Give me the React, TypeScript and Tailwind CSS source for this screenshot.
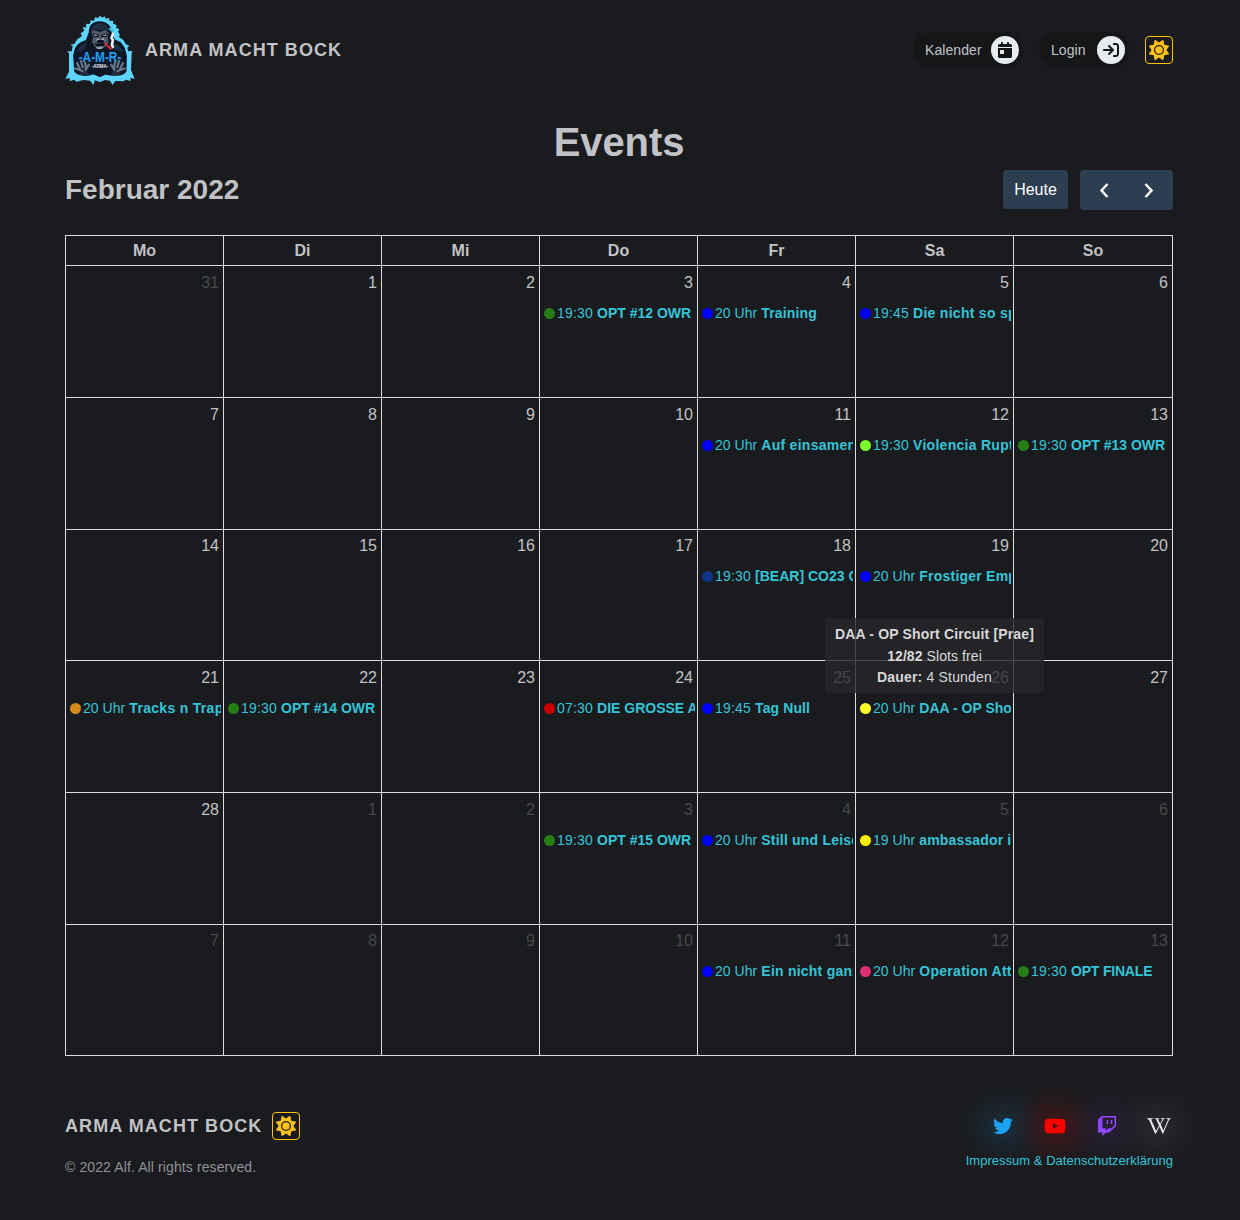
import React from "react";
import { FaTwitter, FaYoutube, FaTwitch, FaWikipediaW } from "react-icons/fa";
import { FaCalendarDay, FaArrowRightToBracket, FaSun } from "react-icons/fa6";

type CalEvent = { color: string; time: string; title: string; tracking: string };
type Day = { n: number; other?: boolean; event?: CalEvent };

const ev = (color: string, time: string, title: string, tracking = "tracking-normal"): CalEvent => ({ color, time, title, tracking });
const GREEN = "#257e15";
const BLUE = "#0000ff";

const weeks: { tall: boolean; days: Day[] }[] = [
  {
    tall: true,
    days: [
      { n: 31, other: true }, { n: 1 }, { n: 2 },
      { n: 3, event: ev(GREEN, "19:30", "OPT #12 OWR") },
      { n: 4, event: ev(BLUE, "20 Uhr", "Training", "tracking-[0.15px]") },
      { n: 5, event: ev(BLUE, "19:45", "Die nicht so spezielle", "tracking-[0.28px]") },
      { n: 6 },
    ],
  },
  {
    tall: true,
    days: [
      { n: 7 }, { n: 8 }, { n: 9 }, { n: 10 },
      { n: 11, event: ev(BLUE, "20 Uhr", "Auf einsamen Wegen", "tracking-[0.27px]") },
      { n: 12, event: ev("#7cfc2a", "19:30", "Violencia Ruptura", "tracking-[0.28px]") },
      { n: 13, event: ev(GREEN, "19:30", "OPT #13 OWR") },
    ],
  },
  {
    tall: false,
    days: [
      { n: 14 }, { n: 15 }, { n: 16 }, { n: 17 },
      { n: 18, event: ev("#113588", "19:30", "[BEAR] CO23 Operation") },
      { n: 19, event: ev(BLUE, "20 Uhr", "Frostiger Empfang", "tracking-[0.22px]") },
      { n: 20 },
    ],
  },
  {
    tall: true,
    days: [
      { n: 21, event: ev("#d68a1c", "20 Uhr", "Tracks n Traps", "tracking-[0.3px]") },
      { n: 22, event: ev(GREEN, "19:30", "OPT #14 OWR") },
      { n: 23 },
      { n: 24, event: ev("#cc0000", "07:30", "DIE GROSSE ARMA") },
      { n: 25, event: ev(BLUE, "19:45", "Tag Null", "tracking-[0.1px]") },
      { n: 26, event: ev("#fcfc2c", "20 Uhr", "DAA - OP Short Circuit") },
      { n: 27 },
    ],
  },
  {
    tall: true,
    days: [
      { n: 28 }, { n: 1, other: true }, { n: 2, other: true },
      { n: 3, other: true, event: ev(GREEN, "19:30", "OPT #15 OWR") },
      { n: 4, other: true, event: ev(BLUE, "20 Uhr", "Still und Leise", "tracking-[0.2px]") },
      { n: 5, other: true, event: ev("#fff000", "19 Uhr", "ambassador in", "tracking-[0.15px]") },
      { n: 6, other: true },
    ],
  },
  {
    tall: false,
    days: [
      { n: 7, other: true }, { n: 8, other: true }, { n: 9, other: true }, { n: 10, other: true },
      { n: 11, other: true, event: ev(BLUE, "20 Uhr", "Ein nicht ganz", "tracking-[0.23px]") },
      { n: 12, other: true, event: ev("#dc3070", "20 Uhr", "Operation Attika", "tracking-[0.27px]") },
      { n: 13, other: true, event: ev(GREEN, "19:30", "OPT FINALE", "tracking-[-0.2px]") },
    ],
  },
];

function Logo() {
  return (
    <svg viewBox="15 15 210 210" className="h-[70px] w-[70px]" role="img" aria-label="A-M-R Arma">
      <path
        fill="#5dd4fc"
        d="M120 17L126 23L134 19L137 26L147 24L148 32L160 33L159 41L170 45L168 53L178 58L174 65L180 75L176 80L190 90L197 102L208 108L202 113L205 124L216 122L215 131L213 180L224 207L211 203L212 213L198 209L190 214L166 213L158 225L150 212L135 210L120 216L104 211L101 225L90 212L70 210L50 215L42 209L29 214L30 205L16 206L27 185L27 130L21 124L35 124L38 108L31 104L43 102L52 88L66 78L62 70L73 62L68 50L78 53L79 41L90 42L92 31L102 33L105 22L114 24Z"
      />
      <path
        fill="#0d1725"
        stroke="#5dd4fc"
        strokeWidth="5"
        d="M119 31C142 31 156 45 157 66L166 86C183 92 197 106 200 125L203 137L202 186C193 200 173 201 155 199L136 197L120 204L100 196L81 200C62 201 47 196 40 185L37 137L41 119C46 103 60 92 76 88L84 66C84 44 98 31 119 31Z"
      />
      <path fill="#202c40" d="M98 48Q120 30 141 48L149 65L139 60H101L91 68ZM47 125L66 104L82 98L73 119ZM192 125L174 104L156 98L165 119ZM54 193L76 180L92 197ZM186 193L164 180L148 197Z" />
      <path fill="#4d5868" d="M94 67L101 60L119 66L137 60L146 68L143 83L146 96L136 110L121 115L103 108L96 97L99 82Z" />
      <path fill="#0b111b" d="M99 69L118 75L115 82L101 80ZM143 69L123 75L125 82L141 80ZM107 90H136L130 98H114ZM102 101L139 99L132 107L111 108Z" />
      <path fill="#9da8b6" d="M102 72L115 77L104 78ZM140 72L127 77L138 78ZM112 84L120 88L107 94ZM130 84L122 88L137 94ZM106 112L132 111L124 117H112Z" />
      <path fill="none" stroke="#e6eeef" strokeWidth="8" d="M161 113C147 101 165 94 156 86C151 80 161 77 159 68" />
      <path fill="none" stroke="#42b9cf" strokeWidth="4" d="M158 65L148 57L157 49M152 61L161 59" />
      <path stroke="#c72d36" strokeWidth="7" d="M134 99L154 118" />
      <g fill="none" stroke="#687484" strokeWidth="7" strokeLinejoin="round">
        <path d="M50 157L60 177M62 150L69 174M75 155L78 176M43 174L70 184M88 162L75 182" />
        <path d="M190 157L180 177M178 150L171 174M165 155L162 176M197 174L170 184M152 162L165 182" />
      </g>
      <text x="120" y="156" textAnchor="middle" fontSize="46" fill="#249ff3" textLength="128" lengthAdjust="spacingAndGlyphs" className="font-['Liberation_Sans'] font-bold">
        -A-M-R-
      </text>
      <text x="120" y="174" textAnchor="middle" fontSize="17" fill="#e5e8ec" textLength="50" lengthAdjust="spacingAndGlyphs" className="font-['Liberation_Sans'] font-bold">
        -ARMA-
      </text>
    </svg>
  );
}

function ThemeButton() {
  return (
    <button className="flex size-7 items-center justify-center rounded border border-[#ffc107] text-[#ffc11a]" aria-label="Theme">
      <FaSun size={20} />
    </button>
  );
}

function NavPill({ label, width, icon }: { label: string; width: string; icon: React.ReactNode }) {
  return (
    <a className={`flex h-9 items-center justify-between rounded-full bg-[#151618] pr-1 pl-3 text-sm ${width}`}>
      <span className="tracking-[0.08px]">{label}</span>
      <span className="flex size-7 items-center justify-center rounded-full bg-[#e9ecef] text-[#151618]">{icon}</span>
    </a>
  );
}

function Chevron({ d }: { d: string }) {
  return (
    <svg viewBox="0 0 16 16" className="size-4" fill="none" stroke="white" strokeWidth="2.5">
      <path d={d} />
    </svg>
  );
}

function DayCell({ day, tall }: { day: Day; tall: boolean }) {
  return (
    <div className="min-w-0 border-r border-b border-[#dddddd]">
      <div className={`pr-1 text-right text-base leading-6 ${tall ? "h-8 pt-[5px]" : "h-[31px] pt-1"} ${day.other ? "text-[#48494c]" : "text-[#c1c2c5]"}`}>{day.n}</div>
      {day.event && (
        <div className="mr-0.5 ml-1 flex h-[31px] items-center overflow-hidden text-sm whitespace-nowrap text-[#35c4d7]">
          <span className="mr-0.5 size-[11px] shrink-0 rounded-full" style={{ background: day.event.color }} />
          <span className={`mr-1 shrink-0 pb-0.5 ${day.event.time.includes(":") ? "tracking-[0.2px]" : "tracking-[0.05px]"}`}>{day.event.time}</span>
          <b className={`min-w-0 overflow-hidden pb-0.5 ${day.event.tracking}`}>{day.event.title}</b>
        </div>
      )}
    </div>
  );
}

const socials = [
  { label: "Twitter", icon: <FaTwitter size={20} />, color: "text-[#1da1f2]", glow: "bg-[radial-gradient(circle,rgba(29,161,242,0.15),rgba(29,161,242,0.04)_38%,transparent_62%)]" },
  { label: "YouTube", icon: <FaYoutube size={22} />, color: "text-[#ff0000]", glow: "bg-[radial-gradient(circle,rgba(255,0,0,0.19),rgba(255,0,0,0.05)_38%,transparent_62%)]" },
  { label: "Twitch", icon: <FaTwitch size={20} />, color: "text-[#9146ff]", glow: "bg-[radial-gradient(circle,rgba(145,70,255,0.1),rgba(145,70,255,0.03)_38%,transparent_62%)]" },
  { label: "Wikipedia", icon: <FaWikipediaW size={24} />, color: "text-[#e9ecef]", glow: "bg-[radial-gradient(circle,rgba(233,236,239,0.07),rgba(233,236,239,0.02)_38%,transparent_62%)]" },
];

export default function App() {
  return (
    <div className="h-[1220px] w-full overflow-hidden bg-[#1a1b1e] font-['Liberation_Sans',Arial,sans-serif] text-[#c1c2c5]">
      <div className="ml-[65px] w-[1108px]">
        <header className="flex h-[100px] items-center justify-between">
          <div className="flex items-center gap-2.5">
            <Logo />
            <span className="text-lg font-bold tracking-[1.05px]">ARMA MACHT BOCK</span>
          </div>
          <nav className="flex items-center">
            <NavPill label="Kalender" width="mr-4 w-[110px]" icon={<FaCalendarDay size={16} />} />
            <NavPill label="Login" width="mr-4 w-[90px]" icon={<FaArrowRightToBracket size={16} />} />
            <ThemeButton />
          </nav>
        </header>

        <main>
          <h1 className="h-[70px] pt-[18px] text-center text-[40px] leading-[48px] font-bold tracking-[-0.1px]">Events</h1>
          <div className="flex h-[65px] justify-between">
            <h2 className="text-[28px] leading-[39px] font-bold">Februar 2022</h2>
            <div className="flex items-start gap-3 text-base text-white">
              <button className="h-[39px] w-[65px] rounded bg-[#2c3e50]">Heute</button>
              <div className="flex h-10 w-[93px] items-center justify-between rounded bg-[#2c3e50] px-4">
                <Chevron d="M11.5 2L5.5 8.5L11.5 15" />
                <Chevron d="M4.5 2L10.5 8.5L4.5 15" />
              </div>
            </div>
          </div>

          <section className="relative border-t border-l border-[#dddddd]">
            <div className="grid h-[30px] grid-cols-[repeat(6,158px)_159px] text-center font-bold">
              {["Mo", "Di", "Mi", "Do", "Fr", "Sa", "So"].map((d) => (
                <div key={d} className="border-r border-b border-[#dddddd] leading-[29px]">{d}</div>
              ))}
            </div>
            {weeks.map((w, i) => (
              <div key={i} className={`grid grid-cols-[repeat(6,158px)_159px] ${w.tall ? "h-[132px]" : "h-[131px]"}`}>
                {w.days.map((d, j) => (
                  <DayCell key={j} day={d} tall={w.tall} />
                ))}
              </div>
            ))}
            <div className="absolute top-[382px] left-[759px] h-[75px] w-[219px] rounded bg-[#25262b]/80 pt-1.5 text-center text-sm leading-[21.7px] whitespace-nowrap text-[#d8d8d9]">
              <b className="tracking-[0.16px]">DAA - OP Short Circuit [Prae]</b>
              <div className="tracking-[0.08px]"><b>12/82</b> Slots frei</div>
              <div className="tracking-[0.18px]"><b>Dauer:</b> 4 Stunden</div>
            </div>
          </section>
        </main>

        <footer className="flex justify-between pt-14">
          <div>
            <div className="flex items-center gap-2.5">
              <span className="text-lg font-bold tracking-[1.07px]">ARMA MACHT BOCK</span>
              <ThemeButton />
            </div>
            <p className="mt-[17px] text-sm leading-5 tracking-[0.11px] text-[#909296]">© 2022 Alf. All rights reserved.</p>
          </div>
          <div>
            <div className="-mt-9 -mr-[36px] flex justify-end">
              {socials.map((s) => (
                <a key={s.label} aria-label={s.label} className={`-ml-[48px] flex size-[100px] items-center justify-center rounded-full ${s.color} ${s.glow}`}>
                  {s.icon}
                </a>
              ))}
            </div>
            <p className="-mt-[25px] text-right text-[13px] leading-5 tracking-[0.02px] text-[#35c4d7]">Impressum &amp; Datenschutzerklärung</p>
          </div>
        </footer>
      </div>
    </div>
  );
}
